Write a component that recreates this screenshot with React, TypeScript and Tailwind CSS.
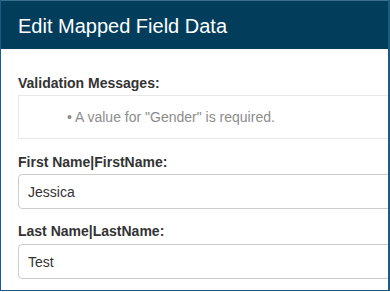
export default function App() {
  const font = { fontFamily: '"Liberation Sans", Arial, Helvetica, sans-serif' };
  return (
    <div className="w-[390px] h-[292px] bg-white" style={font}>
      <div className="w-[390px] h-[291px] border-l border-r-2 border-b border-[#1d5b82] overflow-hidden flex flex-col">
        <div className="h-[49px] bg-[#023d5c] border-t border-[#3b6f8f] flex items-center pl-[17px] shrink-0">
          <span className="text-white text-[20px] leading-none pt-[1px]">Edit Mapped Field Data</span>
        </div>
        <div className="pl-[17px] pt-[24px] flex flex-col">
          <div className="text-[14px] font-bold text-[#333333] leading-[20px]">Validation Messages:</div>
          <div className="w-[400px] h-[44px] mt-[2px] border border-[#e8e8e8] flex items-center pl-[48px] shrink-0">
            <span className="text-[14px] text-[#8c8c8c]">• A value for "Gender" is required.</span>
          </div>
          <div className="mt-[13px] text-[14px] font-bold text-[#333333] leading-[20px]">First Name|FirstName:</div>
          <div className="w-[400px] h-[35px] mt-[2px] border border-[#cccccc] rounded-[4px] flex items-center pl-[9px] shrink-0">
            <span className="text-[14px] text-[#333333] leading-[20px]">Jessica</span>
          </div>
          <div className="mt-[12px] text-[14px] font-bold text-[#333333] leading-[20px]">Last Name|LastName:</div>
          <div className="w-[400px] h-[35px] mt-[3px] border border-[#cccccc] rounded-[4px] flex items-center pl-[9px] shrink-0">
            <span className="text-[14px] text-[#333333] leading-[20px]">Test</span>
          </div>
        </div>
      </div>
    </div>
  );
}
